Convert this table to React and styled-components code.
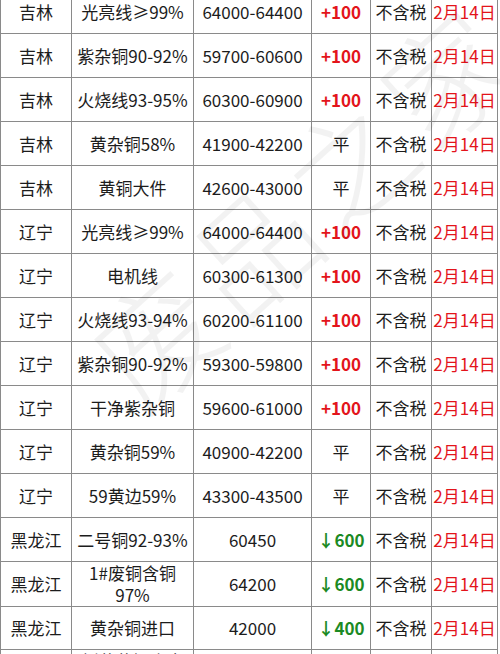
import React from 'react';
import styled, { createGlobalStyle } from 'styled-components';

const GlobalStyle = createGlobalStyle`
  html, body {
    margin: 0;
    padding: 0;
    background: #fff;
  }
  body {
    font-family: "Noto Sans CJK SC", "Noto Sans", sans-serif;
    overflow: hidden;
  }
`;

const Page = styled.div`
  position: relative;
  width: 500px;
  height: 654px;
  overflow: hidden;
`;

const Sheet = styled.div`
  margin-top: -10px;
  width: 497px;
  border-left: 1px solid #8a8a8a;
  box-sizing: border-box;
`;

const Row = styled.div`
  display: grid;
  grid-template-columns: 71px 122px 118px 59px 61px 66px;
  height: 44px;
`;

const Cell = styled.div`
  box-sizing: border-box;
  border-right: 1px solid #8a8a8a;
  border-bottom: 1px solid #8a8a8a;
  display: flex;
  align-items: center;
  justify-content: center;
  text-align: center;
  padding: 0 2px;
  font-size: 17px;
  line-height: 22px;
  color: ${(p) => p.$color || '#1c1c1c'};
  font-weight: ${(p) => (p.$bold ? 700 : 400)};
  white-space: nowrap;
`;

const Watermark = styled.div`
  position: absolute;
  left: 40px;
  top: 140px;
  width: 520px;
  text-align: center;
  font-size: 124px;
  line-height: 1;
  letter-spacing: 6px;
  color: rgba(0, 0, 0, 0.05);
  transform: rotate(-42deg);
  transform-origin: center center;
  white-space: nowrap;
  pointer-events: none;
  font-family: "Noto Sans CJK SC", sans-serif;
  font-weight: 300;
`;

const RED = '#e3141b';
const GREEN = '#1b8a24';

const rows = [
  ['吉林', '光亮线≥99%', '64000-64400', '+100'],
  ['吉林', '紫杂铜90-92%', '59700-60600', '+100'],
  ['吉林', '火烧线93-95%', '60300-60900', '+100'],
  ['吉林', '黄杂铜58%', '41900-42200', '平'],
  ['吉林', '黄铜大件', '42600-43000', '平'],
  ['辽宁', '光亮线≥99%', '64000-64400', '+100'],
  ['辽宁', '电机线', '60300-61300', '+100'],
  ['辽宁', '火烧线93-94%', '60200-61100', '+100'],
  ['辽宁', '紫杂铜90-92%', '59300-59800', '+100'],
  ['辽宁', '干净紫杂铜', '59600-61000', '+100'],
  ['辽宁', '黄杂铜59%', '40900-42200', '平'],
  ['辽宁', '59黄边59%', '43300-43500', '平'],
  ['黑龙江', '二号铜92-93%', '60450', '↓600'],
  ['黑龙江', ['1#废铜含铜', '97%'], '64200', '↓600'],
  ['黑龙江', '黄杂铜进口', '42000', '↓400'],
  ['黑龙江', ['刨花黄铜合金', '线'], '41000', '↓400'],
];

function changeColor(v) {
  if (v.startsWith('+')) return RED;
  if (v.startsWith('↓')) return GREEN;
  return undefined;
}

function ItemName({ value }) {
  if (!Array.isArray(value)) return value;
  return (
    <span>
      {value[0]}
      <br />
      {value[1]}
    </span>
  );
}

export default function App() {
  return (
    <Page>
      <GlobalStyle />
      <Sheet>
        {rows.map(([area, item, price, change], i) => (
          <Row key={i}>
            <Cell>{area}</Cell>
            <Cell>
              <ItemName value={item} />
            </Cell>
            <Cell>{price}</Cell>
            <Cell $color={changeColor(change)} $bold={change !== '平'}>
              {change}
            </Cell>
            <Cell>不含税</Cell>
            <Cell $color={RED}>2月14日</Cell>
          </Row>
        ))}
      </Sheet>
      <Watermark>废品之家</Watermark>
    </Page>
  );
}
